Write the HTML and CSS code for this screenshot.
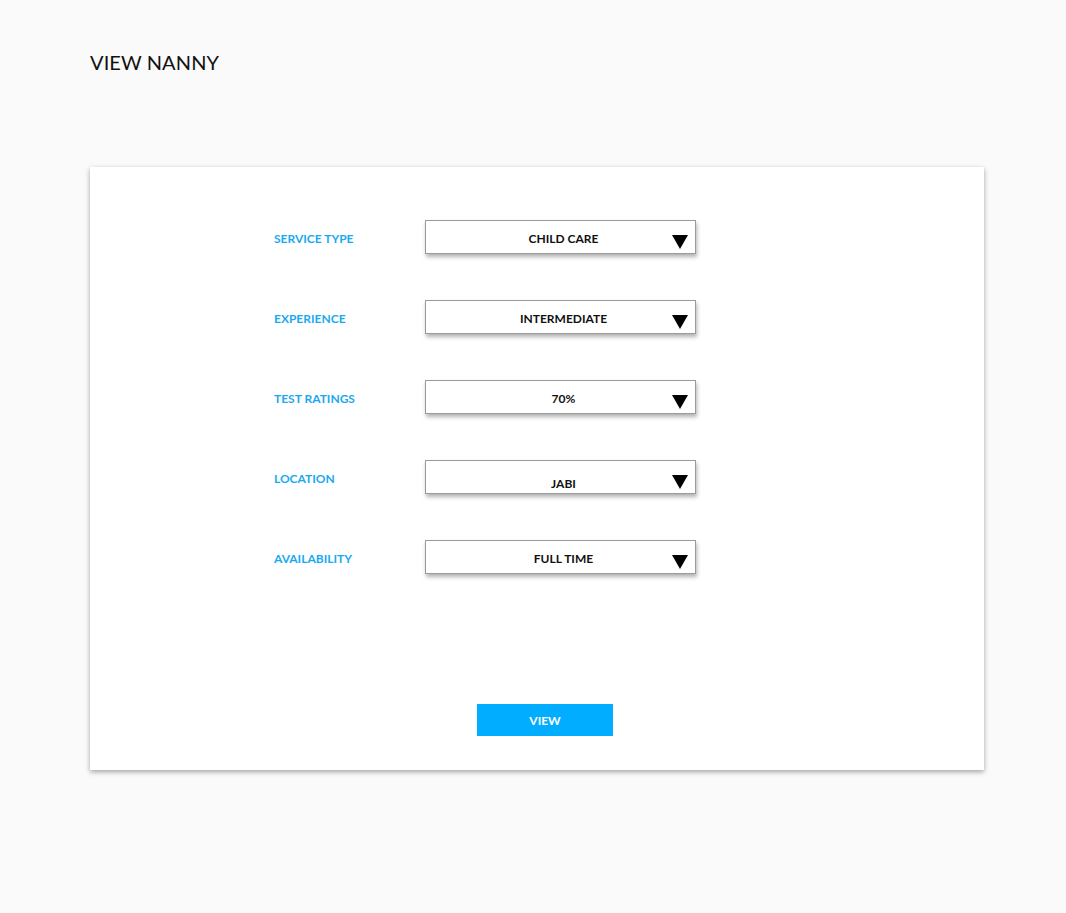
FILE: index.html
```html
<!DOCTYPE html>
<html>
<head>
<meta charset="utf-8">
<link rel="stylesheet" href="styles.css">
</head>
<body>
<h1 class="title">VIEW NANNY</h1>
<div class="card">
  <div class="form">
    <div class="row">
      <span class="label">SERVICE TYPE</span>
      <div class="select"><span class="value">CHILD CARE</span><span class="arrow"></span></div>
    </div>
    <div class="row">
      <span class="label">EXPERIENCE</span>
      <div class="select"><span class="value">INTERMEDIATE</span><span class="arrow"></span></div>
    </div>
    <div class="row">
      <span class="label">TEST RATINGS</span>
      <div class="select"><span class="value">70%</span><span class="arrow"></span></div>
    </div>
    <div class="row">
      <span class="label">LOCATION</span>
      <div class="select low"><span class="value">JABI</span><span class="arrow"></span></div>
    </div>
    <div class="row">
      <span class="label">AVAILABILITY</span>
      <div class="select"><span class="value">FULL TIME</span><span class="arrow"></span></div>
    </div>
  </div>
  <div class="actions">
    <button class="btn">VIEW</button>
  </div>
</div>
</body>
</html>
```

FILE: styles.css
```css
html, body {
  margin: 0;
  padding: 0;
  background: #fafafa;
  font-family: Lato, "Open Sans", sans-serif;
}
body {
  padding: 48px 82px 0 90px;
  min-height: 913px;
  box-sizing: border-box;
}
.title {
  margin: 0;
  font-size: 20px;
  font-weight: 400;
  color: #111;
  line-height: 28px;
  letter-spacing: 0.1px;
}
.card {
  margin-top: 91px;
  width: 894px;
  height: 603px;
  box-sizing: border-box;
  background: #fff;
  box-shadow: 0 2px 5px rgba(0,0,0,0.35);
  padding: 53px 0 0 184px;
  display: flex;
  flex-direction: column;
}
.form {
  display: flex;
  flex-direction: column;
  gap: 46px;
}
.row {
  display: flex;
  align-items: center;
  height: 34px;
}
.label {
  width: 151px;
  font-size: 12px;
  font-weight: 700;
  color: #1aa9f0;
  position: relative;
  top: 1px;
}
.select {
  position: relative;
  width: 271px;
  height: 34px;
  box-sizing: border-box;
  border: 1px solid #9a9a9a;
  background: #fff;
  box-shadow: 1px 3px 4px rgba(0,0,0,0.3);
  display: flex;
  align-items: center;
  justify-content: center;
}
.value {
  font-size: 12px;
  font-weight: 700;
  color: #111;
  padding-top: 3px;
  padding-left: 6px;
}
.select.low .value {
  padding-top: 12px;
}
.arrow {
  position: absolute;
  right: 7px;
  top: 14px;
  width: 0;
  height: 0;
  border-left: 8.5px solid transparent;
  border-right: 8.5px solid transparent;
  border-top: 14px solid #000;
}
.actions {
  margin-top: 130px;
  padding-left: 203px;
}
.btn {
  width: 136px;
  height: 32px;
  border: 0;
  background: #00adff;
  color: #fff;
  font-family: Lato, "Open Sans", sans-serif;
  font-size: 12px;
  font-weight: 700;
  padding: 0;
}
```
